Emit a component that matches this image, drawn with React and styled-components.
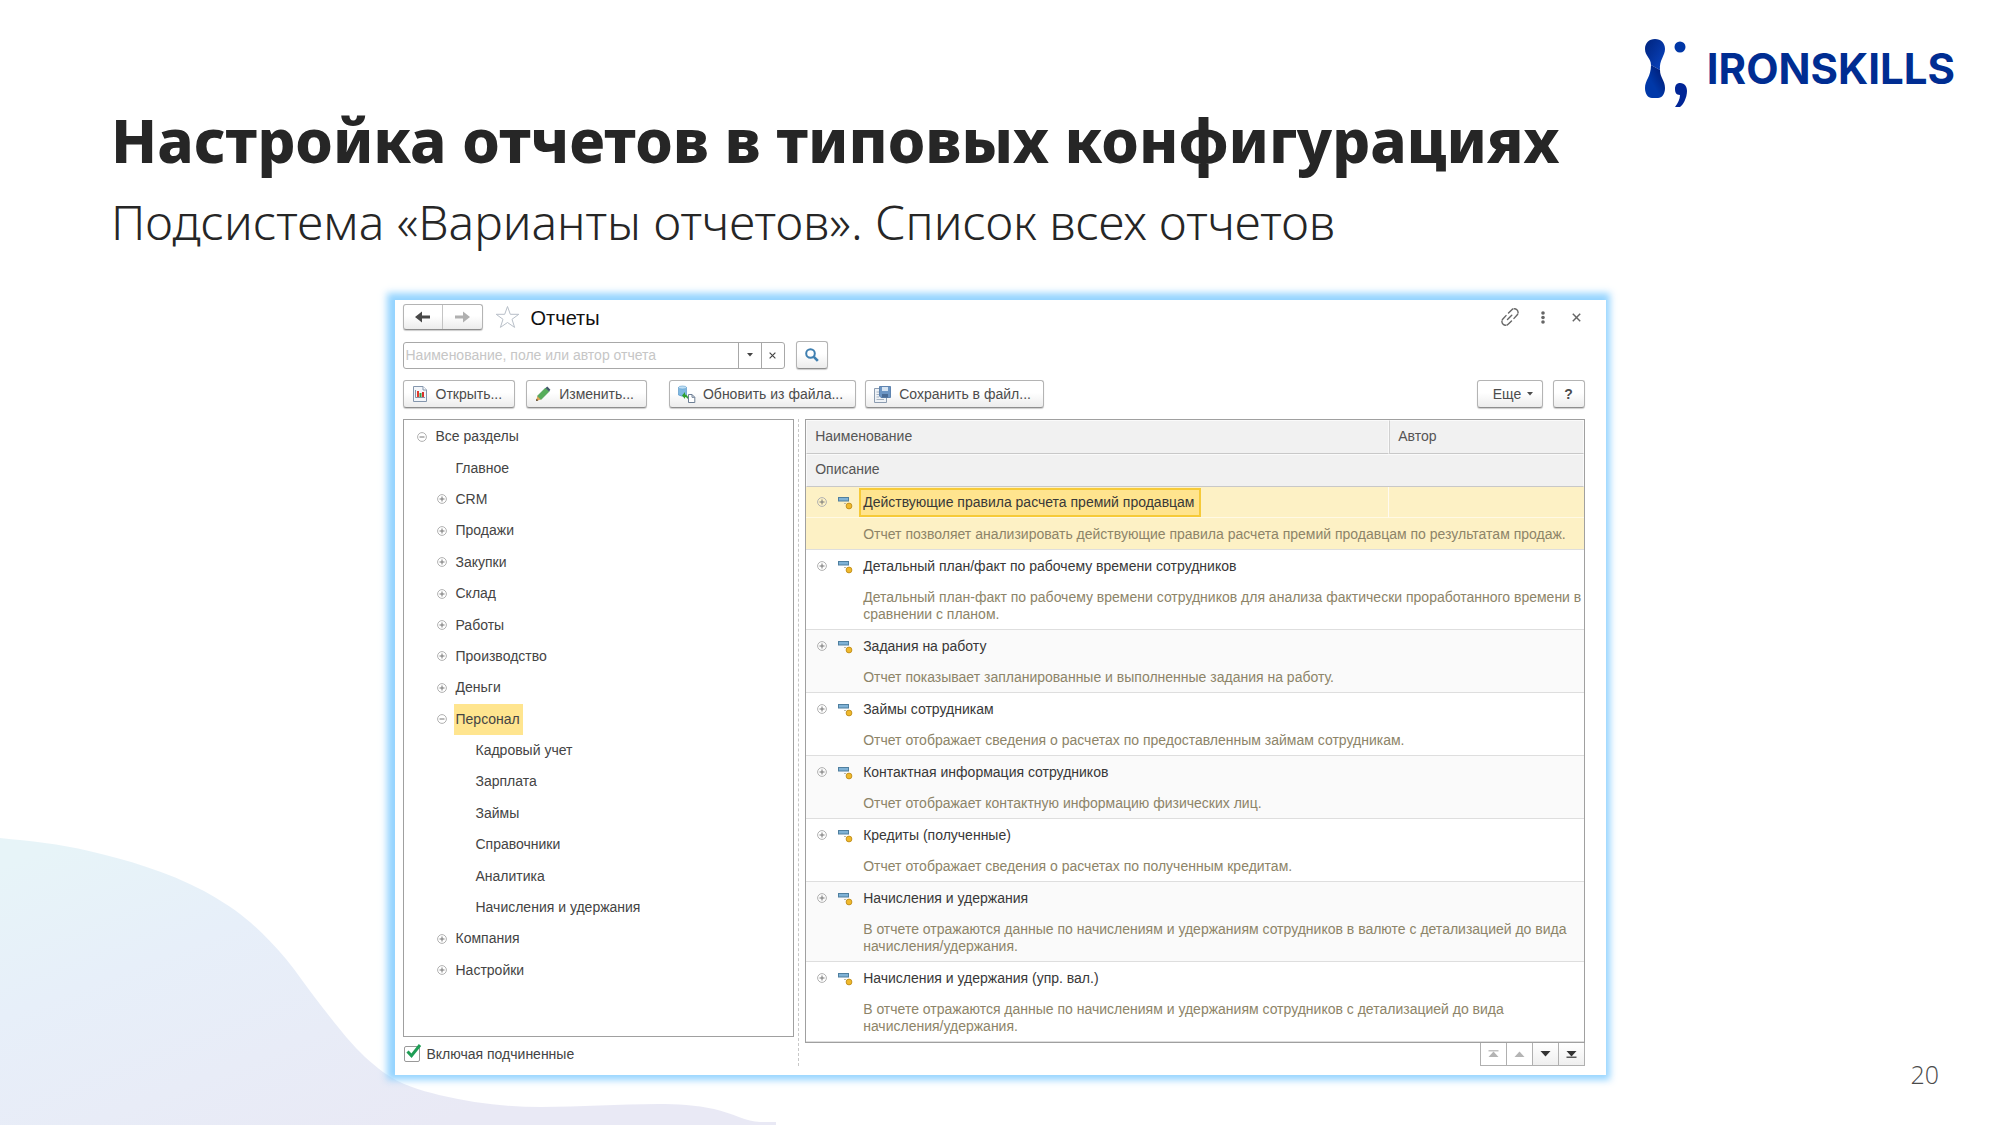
import React, { useState } from "react";
import styled, { createGlobalStyle, css } from "styled-components";

const GlobalStyle = createGlobalStyle`
  *, *::before, *::after { box-sizing: border-box; }
  body { margin: 0; background: #fff; font-family: "Liberation Sans", Arial, sans-serif; }
  button, input { font: inherit; color: inherit; }
  button { padding: 0; border: 0; background: none; }
`;

/* ---------- Slide ---------- */

const Slide = styled.div`
  position: relative;
  display: flex;
  flex-direction: column;
  min-height: 100vh;
  overflow: hidden;
`;

const Wave = styled.svg`
  position: absolute;
  left: 0;
  bottom: 0;
  width: 780px;
  height: 290px;
`;

const SlideHeader = styled.header`
  position: relative;
  display: grid;
  grid-template-columns: minmax(0, 1fr) auto;
  align-items: start;
  height: 300px;
  padding: 38px 45px 0 111px;
`;

const Headings = styled.div`
  padding-top: 60px;
  color: #262626;
`;

const Title = styled.h1`
  margin: 0;
  font: 800 60px/84px "Noto Sans", sans-serif;
`;

const Subtitle = styled.p`
  margin: 0;
  font: 300 48px/80px "Noto Sans", sans-serif;
`;

const Brand = styled.div`
  display: flex;
  align-items: flex-start;
  gap: 19px;
  color: #002d92;
  font: 700 42px/62px Inter, sans-serif;
`;

const Stage = styled.main`
  position: relative;
  flex: 1;
  display: grid;
  grid-template-columns: minmax(0, 1fr) minmax(0, 1211px) minmax(0, 1fr);
`;

const PageNumber = styled.footer`
  grid-column: 3;
  align-self: end;
  justify-self: end;
  padding: 0 61px 34px 0;
  color: #4a4a4a;
  font: 300 25px/34px "Open Sans", sans-serif;
`;

/* ---------- Window ---------- */

const Window = styled.section`
  grid-column: 2;
  align-self: start;
  display: flex;
  flex-direction: column;
  gap: 11px;
  padding: 4px 21px 9px 8px;
  background: #fff;
  box-shadow: -2px -1px 7px 6px rgba(130, 204, 255, 0.85);
  color: #444;
  font-size: 14px;
  line-height: 17px;
`;

const Bar = styled.div`
  display: flex;
  align-items: center;
  height: ${(p) => p.$height}px;
`;

const Spacer = styled.div`
  flex: ${(p) => (p.$width ? `0 0 ${p.$width}px` : "1")};
`;

const raised = css`
  border: 1px solid #b4b4b4;
  border-bottom-color: #8e8e8e;
  border-radius: 3px;
  background: linear-gradient(#fff 45%, #ececec);
  box-shadow: 0 1px 1px rgba(0, 0, 0, 0.2);
`;

const History = styled.div`
  ${raised}
  display: flex;
  width: 80px;
  height: 26px;
`;

const HistoryButton = styled.button`
  flex: 1;
  display: grid;
  place-items: center;
  color: ${(p) => (p.disabled ? "#b0b0b0" : "#484848")};
  & + & { border-left: 1px solid #c4c4c4; }
`;

const StarButton = styled.button`
  display: grid;
  margin: 0 11px 0 12px;
`;

const WindowTitle = styled.h2`
  margin: 0;
  padding-top: 1px;
  color: #111;
  font-size: 20px;
  font-weight: 400;
  line-height: 26px;
`;

const TitleActions = styled.div`
  display: flex;
  margin-left: auto;
  color: #666;
`;

const TitleAction = styled.button`
  display: grid;
  place-items: center;
  width: 33px;
  height: 24px;
  &:last-child { margin-right: -8px; }
`;

const SearchBox = styled.div`
  display: flex;
  width: 382px;
  height: 27px;
  margin-right: 11px;
  border: 1px solid #a8a8a8;
  border-radius: 3px;
`;

const SearchInput = styled.input`
  flex: 1;
  min-width: 0;
  padding: 0 2px;
  border: 0;
  outline: 0;
  background: none;
  &::placeholder { color: #c6c6c6; opacity: 1; }
`;

const SearchAddon = styled.button`
  display: grid;
  place-items: center;
  width: 23px;
  border-left: 1px solid #a8a8a8;
`;

const Button = styled.button`
  ${raised}
  display: flex;
  align-items: center;
  justify-content: center;
  gap: ${(p) => (p.$icon ? 8 : 6)}px;
  height: 28px;
  padding: ${(p) => (p.$icon ? "0 12px 0 8px" : "0")};
  width: ${(p) => (p.$width ? `${p.$width}px` : "auto")};
  margin-left: ${(p) => p.$gap || 0}px;
  color: #4c4c4c;
  font-weight: ${(p) => (p.$strong ? 700 : 400)};
  white-space: nowrap;
  svg { overflow: visible; }
`;

const Panes = styled.div`
  display: grid;
  grid-template-columns: minmax(0, 392fr) 11px minmax(0, 780fr);
`;

const LeftPane = styled.div`
  display: flex;
  flex-direction: column;
`;

const Splitter = styled.div`
  margin-left: 4px;
  border-left: 1px dashed #c8c8c8;
`;

const Tree = styled.ul`
  flex: 1;
  display: flex;
  flex-direction: column;
  margin: 0;
  padding: 1px 0 50px;
  border: 1px solid #a0a0a0;
  list-style: none;
`;

const TreeRow = styled.li`
  flex: 1;
  display: flex;
  align-items: center;
  gap: 7px;
  padding-left: ${(p) => 13 + p.$level * 20}px;
`;

const TreeLabel = styled.span`
  display: flex;
  align-items: center;
  align-self: stretch;
  padding: 0 3px 0 2px;
  background: ${(p) => (p.$selected ? "#ffe58f" : "none")};
`;

const ToggleButton = styled.button`
  display: grid;
  flex: 0 0 10px;
  height: 10px;
`;

const CheckRow = styled.label`
  display: flex;
  align-items: center;
  gap: 7px;
  height: 29px;
  padding: 5px 0 0 1px;
`;

const CheckMark = styled.span`
  position: relative;
  display: grid;
  svg { position: absolute; left: 2px; top: -2px; pointer-events: none; }
  input:not(:checked) + svg { display: none; }
`;

const CheckInput = styled.input`
  appearance: none;
  width: 16px;
  height: 16px;
  margin: 0;
  border: 1px solid #999;
  border-radius: 2px;
`;

/* ---------- Report table ---------- */

const Table = styled.table`
  width: 100%;
  table-layout: fixed;
  border-collapse: separate;
  border-spacing: 0;
  border: 1px solid #a0a0a0;
`;

const Head = styled.th`
  height: ${(p) => p.$height}px;
  padding: 0 8px 2px;
  border: 1px solid #fafafa;
  border-bottom-color: #c8c8c8;
  background: #f1f1f1;
  color: #555;
  font-weight: 400;
  text-align: left;
  & + & { border-left-color: #d0d0d0; }
`;

const Entry = styled.tbody`
  background: ${(p) => (p.$selected ? "#fdf1c5" : p.$shaded ? "#fafafa" : "#fff")};
`;

const NameCell = styled.td`
  height: 31px;
  padding: 0;
  border-right: ${(p) => (p.$selected ? "1px solid #fffaf0" : "0")};
  border-bottom: ${(p) => (p.$selected ? "1px solid #fff9e4" : "0")};
`;

const AuthorCell = styled.td`
  padding: 0;
  border-bottom: ${(p) => (p.$selected ? "1px solid #fff9e4" : "0")};
`;

const NameLine = styled.div`
  display: flex;
  align-items: center;
  gap: 11px;
  height: 30px;
  padding-left: 11px;
`;

const NameLabel = styled.span`
  display: flex;
  align-items: center;
  height: 29px;
  margin: 1px 0 0 -5px;
  padding: 0 4px 0 2px;
  border: 2px solid ${(p) => (p.$selected ? "#f6ca38" : "transparent")};
  background: ${(p) => (p.$selected ? "#ffe48e" : "none")};
  color: #383838;
`;

const DescriptionCell = styled.td`
  padding: 8px 1px 6px 57px;
  border-bottom: 1px solid #dedede;
  color: #8d8468;
`;

const Pager = styled.div`
  display: flex;
  justify-content: flex-end;
`;

const PagerButton = styled.button`
  display: grid;
  place-items: center;
  width: 27px;
  height: 23px;
  margin-left: -1px;
  border: 1px solid #b0b0b0;
  border-top: 0;
  background: ${(p) => (p.disabled ? "#fff" : "linear-gradient(#fff, #efefef)")};
  color: ${(p) => (p.disabled ? "#b4b4b4" : "#333")};
`;

/* ---------- Icons ---------- */

const LogoMark = () => (
  <svg width="44" height="70" viewBox="0 0 44 70" aria-hidden="true">
    <defs>
      <linearGradient id="top" x1="0" y1="0" x2="1" y2="1">
        <stop offset="0" stopColor="#00237c" />
        <stop offset="1" stopColor="#0a46c4" />
      </linearGradient>
      <linearGradient id="bottom" x1="0" y1="1" x2="1" y2="0">
        <stop offset="0.4" stopColor="#0038a8" />
        <stop offset="1" stopColor="#001468" />
      </linearGradient>
    </defs>
    <path d="M11 1C17 1 21 5 21 11C21 18 15 22 16 32L7 27C7 20 1 18 1 11C1 5 5 1 11 1Z" fill="url(#top)" />
    <path d="M7 27L16 32C16 40 21 42 21 50C21 56 18 60 14 60H8C4 60 1 56 1 50C1 42 7 39 7 27Z" fill="url(#bottom)" />
    <circle cx="36" cy="9" r="5.5" fill="#0036a6" />
    <path d="M36 45C41 45 43 49 43 53C43 60 39 67 36 69H31C34 65 36 61 36 57C32 57 31 54 31 51C31 47 33 45 36 45Z" fill="#002596" />
  </svg>
);

const Arrow = ({ flip }) => (
  <svg width="16" height="12" viewBox="0 0 16 12" aria-hidden="true">
    <path d={flip ? "M16 6L9 0.5V4.5H1V7.5H9V11.5Z" : "M0 6L7 0.5V4.5H15V7.5H7V11.5Z"} fill="currentColor" />
  </svg>
);

const Star = () => (
  <svg width="25" height="24" viewBox="0 0 25 24" fill="none" stroke="#b8bfc8" aria-hidden="true">
    <path d="M12.5 1.5L15.3 9.3H23.8L17 14.3L19.6 22.4L12.5 17.5L5.4 22.4L8 14.3L1.2 9.3H9.7Z" />
  </svg>
);

const LinkIcon = () => (
  <svg width="18" height="18" viewBox="0 0 18 18" fill="none" stroke="currentColor" strokeWidth="1.4" strokeLinecap="round" aria-hidden="true">
    <path d="M6.5 11.5L11.5 6.5M7.5 5L10.6 1.9A3.6 3.6 0 0 1 16.1 7L13 10.4M10.5 13L7.4 16.1A3.6 3.6 0 0 1 1.9 11L5 7.6" strokeDasharray="6 1.4" />
  </svg>
);

const Dots = () => (
  <svg width="4" height="13" viewBox="0 0 4 13" fill="currentColor" aria-hidden="true">
    <circle cx="2" cy="2" r="1.8" />
    <circle cx="2" cy="6.5" r="1.8" />
    <circle cx="2" cy="11" r="1.8" />
  </svg>
);

const Cross = ({ size }) => (
  <svg width={size} height={size} viewBox="0 0 8 8" stroke="currentColor" strokeWidth="1.3" aria-hidden="true">
    <path d="M0.7 0.7L7.3 7.3M7.3 0.7L0.7 7.3" />
  </svg>
);

const Caret = () => (
  <svg width="6" height="4" viewBox="0 0 6 4" fill="currentColor" aria-hidden="true">
    <path d="M0 0H6L3 3.6Z" />
  </svg>
);

const Lens = () => (
  <svg width="14" height="14" viewBox="0 0 14 14" fill="none" stroke="#3f7fb0" aria-hidden="true">
    <circle cx="5.5" cy="5.5" r="4.3" strokeWidth="2" />
    <path d="M8.8 8.8L12.8 12.8" strokeWidth="2.6" />
  </svg>
);

const ReportIcon = () => (
  <svg width="16" height="16" viewBox="0 0 16 16" aria-hidden="true">
    <path d="M1.5 0.5H11L14.5 4V15.5H1.5Z" fill="#f3f6fa" stroke="#8496ad" />
    <path d="M11 0.5V4H14.5" fill="#fff" stroke="#8496ad" />
    <path d="M3.5 4V11.5H13" fill="none" stroke="#6b7c92" strokeWidth="0.8" />
    <rect x="5" y="5" width="2" height="6" fill="#e23b2e" />
    <rect x="7.5" y="7" width="2" height="4" fill="#2f9e4a" />
    <rect x="10" y="6" width="2" height="5" fill="#d8322c" />
  </svg>
);

const PencilIcon = () => (
  <svg width="16" height="16" viewBox="0 0 16 16" aria-hidden="true">
    <path d="M1 15L2.5 10L6 13.5Z" fill="#e0a556" />
    <path d="M1 15L1.6 12.8L3.2 14.4Z" fill="#4a3a28" />
    <path d="M2.5 10L10.5 2L14 5.5L6 13.5Z" fill="#56ad5a" stroke="#3c8d45" strokeWidth="0.6" />
    <path d="M10.5 2L12.3 0.6L15.4 3.7L14 5.5Z" fill="#41566b" />
  </svg>
);

const ImportIcon = () => (
  <svg width="17" height="17" viewBox="0 0 17 17" aria-hidden="true">
    <path d="M0.5 1.5V9Q4.5 11.5 8.5 9V1.5Z" fill="#7fb9e2" stroke="#4f8fc2" strokeWidth="0.6" />
    <ellipse cx="4.5" cy="1.5" rx="4" ry="1.5" fill="#bfe0f5" stroke="#5f9ccc" strokeWidth="0.6" />
    <path d="M4 9.5L7 6V8.4Q10.5 9 10 13Q8.5 11 7 11V13Z" fill="#2fa02f" />
    <path d="M10.5 8.5H14L16.8 11.3V16.5H10.5Z" fill="#fff" stroke="#6d7f95" />
    <path d="M14 8.5V11.3H16.8" fill="none" stroke="#6d7f95" />
  </svg>
);

const SaveIcon = () => (
  <svg width="17" height="17" viewBox="0 0 17 17" aria-hidden="true">
    <path d="M0.5 2.5H12.5V16.5H0.5Z" fill="#eef2f6" stroke="#8c9cb0" />
    <path d="M2.5 6H5M2.5 8.5H5M2.5 11H5M2.5 13.5H10" stroke="#a8b4c2" />
    <path d="M5.5 0.5H16.5V11.5H7L5.5 10Z" fill="#6b95c4" stroke="#5f84b0" />
    <rect x="8" y="1" width="6" height="4" fill="#d6e4f2" />
    <rect x="8" y="8" width="6" height="3.5" fill="#4a6c96" />
  </svg>
);

const ItemIcon = () => (
  <svg width="15" height="18" viewBox="0 0 15 18" aria-hidden="true">
    <rect x="0.5" y="4.5" width="10" height="3.5" fill="#7fb2d6" stroke="#4f7f9f" />
    <path d="M6 10.5H8" fill="none" stroke="#b8b8a8" />
    <circle cx="11" cy="13" r="2.9" fill="#f0b92c" stroke="#b98512" strokeWidth="0.8" />
  </svg>
);

const ToggleIcon = ({ open }) => (
  <svg width="10" height="10" viewBox="0 0 10 10" fill="none" aria-hidden="true">
    <circle cx="5" cy="5" r="4.4" stroke="#b0b0b0" />
    <path d={open ? "M2.5 5H7.5" : "M2.5 5H7.5M5 2.5V7.5"} stroke="#777" />
  </svg>
);

const CheckIcon = () => (
  <svg width="16" height="15" viewBox="0 0 16 15" fill="none" stroke="#1f9d55" strokeWidth="3" aria-hidden="true">
    <path d="M1.5 7.5L5.5 11.8L14 1" />
  </svg>
);

const PagerIcon = ({ down, edge }) => (
  <svg width="11" height="8" viewBox="0 0 11 8" fill="currentColor" aria-hidden="true">
    <path d={down ? "M0.5 1H10.5L5.5 6.5Z" : "M0.5 7H10.5L5.5 1.5Z"} />
    {edge && <rect x="0.5" y={down ? 6.6 : 0.2} width="10" height="1.2" />}
  </svg>
);

/* ---------- Data ---------- */

const sections = [
  { name: "Все разделы", level: 0, toggle: "open" },
  { name: "Главное", level: 1 },
  { name: "CRM", level: 1, toggle: "closed" },
  { name: "Продажи", level: 1, toggle: "closed" },
  { name: "Закупки", level: 1, toggle: "closed" },
  { name: "Склад", level: 1, toggle: "closed" },
  { name: "Работы", level: 1, toggle: "closed" },
  { name: "Производство", level: 1, toggle: "closed" },
  { name: "Деньги", level: 1, toggle: "closed" },
  { name: "Персонал", level: 1, toggle: "open", selected: true },
  { name: "Кадровый учет", level: 2 },
  { name: "Зарплата", level: 2 },
  { name: "Займы", level: 2 },
  { name: "Справочники", level: 2 },
  { name: "Аналитика", level: 2 },
  { name: "Начисления и удержания", level: 2 },
  { name: "Компания", level: 1, toggle: "closed" },
  { name: "Настройки", level: 1, toggle: "closed" },
];

const reports = [
  ["Действующие правила расчета премий продавцам", "Отчет позволяет анализировать действующие правила расчета премий продавцам по результатам продаж."],
  ["Детальный план/факт по рабочему времени сотрудников", "Детальный план-факт по рабочему времени сотрудников для анализа фактически проработанного времени в сравнении с планом."],
  ["Задания на работу", "Отчет показывает запланированные и выполненные задания на работу."],
  ["Займы сотрудникам", "Отчет отображает сведения о расчетах по предоставленным займам сотрудникам."],
  ["Контактная информация сотрудников", "Отчет отображает контактную информацию физических лиц."],
  ["Кредиты (полученные)", "Отчет отображает сведения о расчетах по полученным кредитам."],
  ["Начисления и удержания", "В отчете отражаются данные по начислениям и удержаниям сотрудников в валюте с детализацией до вида начисления/удержания."],
  ["Начисления и удержания (упр. вал.)", "В отчете отражаются данные по начислениям и удержаниям сотрудников с детализацией до вида начисления/удержания."],
];

/* ---------- Page ---------- */

const SectionTree = () => (
  <Tree>
    {sections.map((s) => (
      <TreeRow key={s.name} $level={s.level}>
        {s.toggle ? (
          <ToggleButton type="button" aria-label={s.name} aria-expanded={s.toggle === "open"}>
            <ToggleIcon open={s.toggle === "open"} />
          </ToggleButton>
        ) : (
          <Spacer $width={10} />
        )}
        <TreeLabel $selected={s.selected}>{s.name}</TreeLabel>
      </TreeRow>
    ))}
  </Tree>
);

const ReportTable = () => (
  <Table>
    <colgroup>
      <col />
      <col style={{ width: "25%" }} />
    </colgroup>
    <thead>
      <tr>
        <Head $height={34} scope="col">Наименование</Head>
        <Head $height={34} scope="col">Автор</Head>
      </tr>
      <tr>
        <Head $height={33} colSpan={2} scope="col">Описание</Head>
      </tr>
    </thead>
    {reports.map(([name, description], i) => (
      <Entry key={name} $selected={i === 0} $shaded={i % 2 === 0}>
        <tr>
          <NameCell $selected={i === 0}>
            <NameLine>
              <ToggleButton type="button" aria-label={name} aria-expanded={false}>
                <ToggleIcon />
              </ToggleButton>
              <ItemIcon />
              <NameLabel $selected={i === 0}>{name}</NameLabel>
            </NameLine>
          </NameCell>
          <AuthorCell $selected={i === 0} />
        </tr>
        <tr>
          <DescriptionCell colSpan={2}>{description}</DescriptionCell>
        </tr>
      </Entry>
    ))}
  </Table>
);

export default function App() {
  const [nested, setNested] = useState(true);
  return (
    <Slide>
      <GlobalStyle />
      <Wave viewBox="0 0 780 290" aria-hidden="true">
        <defs>
          <linearGradient id="wave" x1="0" y1="0.1" x2="0.75" y2="0.8">
            <stop offset="0" stopColor="#e7f4f8" />
            <stop offset="0.35" stopColor="#e7eff9" />
            <stop offset="1" stopColor="#e9e9f5" />
          </linearGradient>
        </defs>
        <path
          d="M0 3C30 6 60 9 89 16C127 25 166 36 204 56C218 64 232 72 245 83C259 94 273 109 286 124C296 136 306 151 316 164C326 177 337 191 347 203C359 217 371 228 383 237C401 250 420 255 439 260C473 268 507 272 541 272C580 272 619 269 658 269C677 269 696 270 714 274C732 278 747 287 760 287H776V290H0Z"
          fill="url(#wave)"
        />
      </Wave>

      <SlideHeader>
        <Headings>
          <Title>Настройка отчетов в типовых конфигурациях</Title>
          <Subtitle>Подсистема «Варианты отчетов». Список всех отчетов</Subtitle>
        </Headings>
        <Brand>
          <LogoMark />
          <span>IRONSKILLS</span>
        </Brand>
      </SlideHeader>

      <Stage>
        <Window>
          <Bar $height={26}>
            <History>
              <HistoryButton type="button" aria-label="Назад"><Arrow /></HistoryButton>
              <HistoryButton type="button" aria-label="Вперед" disabled><Arrow flip /></HistoryButton>
            </History>
            <StarButton type="button" aria-label="Избранное"><Star /></StarButton>
            <WindowTitle>Отчеты</WindowTitle>
            <TitleActions>
              <TitleAction type="button" aria-label="Ссылка"><LinkIcon /></TitleAction>
              <TitleAction type="button" aria-label="Меню"><Dots /></TitleAction>
              <TitleAction type="button" aria-label="Закрыть"><Cross size={9} /></TitleAction>
            </TitleActions>
          </Bar>

          <Bar $height={28}>
            <SearchBox>
              <SearchInput type="text" aria-label="Поиск отчета" placeholder="Наименование, поле или автор отчета" />
              <SearchAddon type="button" aria-label="История поиска"><Caret /></SearchAddon>
              <SearchAddon type="button" aria-label="Очистить"><Cross size={7} /></SearchAddon>
            </SearchBox>
            <Button type="button" $width={32} aria-label="Найти"><Lens /></Button>
          </Bar>

          <Bar $height={28}>
            <Button type="button" $icon><ReportIcon />Открыть...</Button>
            <Button type="button" $icon $gap={11}><PencilIcon />Изменить...</Button>
            <Button type="button" $icon $gap={22}><ImportIcon />Обновить из файла...</Button>
            <Button type="button" $icon $gap={9}><SaveIcon />Сохранить в файл...</Button>
            <Spacer />
            <Button type="button" $width={66}><Spacer $width={1} />Еще<Caret /></Button>
            <Button type="button" $width={32} $gap={10} $strong>?</Button>
          </Bar>

          <Panes>
            <LeftPane>
              <SectionTree />
              <CheckRow>
                <CheckMark>
                  <CheckInput type="checkbox" checked={nested} onChange={(e) => setNested(e.target.checked)} />
                  <CheckIcon />
                </CheckMark>
                Включая подчиненные
              </CheckRow>
            </LeftPane>
            <Splitter />
            <div>
              <ReportTable />
              <Pager>
                <PagerButton type="button" aria-label="В начало" disabled><PagerIcon edge /></PagerButton>
                <PagerButton type="button" aria-label="Выше" disabled><PagerIcon /></PagerButton>
                <PagerButton type="button" aria-label="Ниже"><PagerIcon down /></PagerButton>
                <PagerButton type="button" aria-label="В конец"><PagerIcon down edge /></PagerButton>
              </Pager>
            </div>
          </Panes>
        </Window>
        <PageNumber>20</PageNumber>
      </Stage>
    </Slide>
  );
}
